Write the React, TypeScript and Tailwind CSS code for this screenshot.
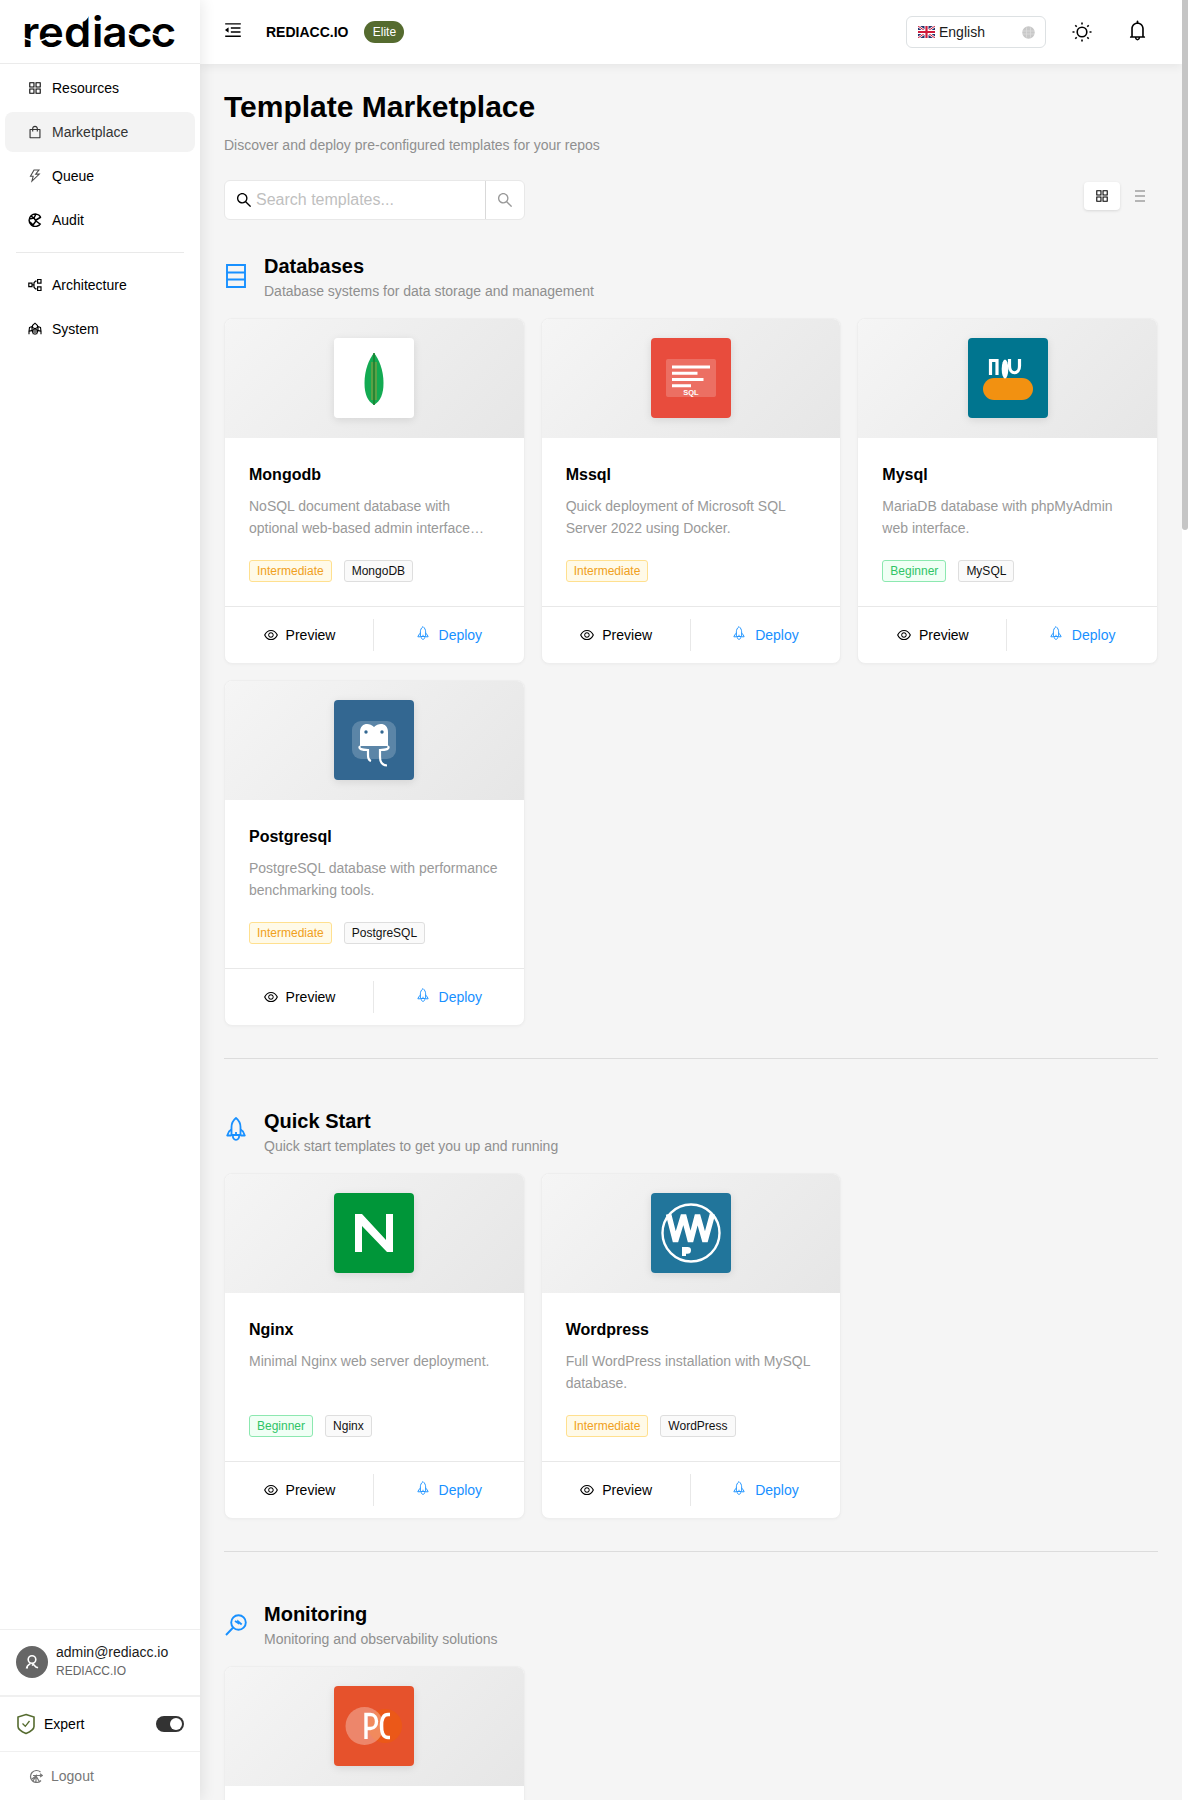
import React from "react";
import { AiOutlineAppstore, AiOutlineBell, AiOutlineEye, AiOutlineMenuFold, AiOutlineSearch, AiOutlineShopping, AiOutlineThunderbolt } from "react-icons/ai";

function Wordmark() {
  return (
    <svg className="block overflow-visible" width="152" height="40" viewBox="0 0 152 40">
      <g transform="scale(1.04 1)">
        <text x="-2 13.5 38.5 65.5 75.5 99 122" y="34.5" fontFamily="Inter, sans-serif" fontWeight="600" fontSize="42">rediacc</text>
      </g>
      <path fill="#fff" d="M58 2v8q5-1 8-8z" />
      <path stroke="#fff" strokeWidth="1.8" fill="none" d="M0 26L9 29M16 29L26 25M103 21l9 3M127 21l9 3" />
    </svg>
  );
}

function RocketIcon({ width, height, stroke, className }: { width: number; height: number; stroke: number; className?: string }) {
  return (
    <svg className={className} width={width} height={height} viewBox="0 0 20 24" fill="none" stroke="currentColor" strokeWidth={stroke} strokeLinejoin="round">
      <path d="M10 1C7 3.500 5.500 6.500 5.500 10v8h9v-8C14.500 6.500 13 3.500 10 1z" />
      <path d="M5.500 12.500L3 14.500 1.200 18.500H5.500M14.500 12.500l2.500 2 1.800 4h-4.300M7 18.500c-.6 2 1 4.300 3 4.300s3.600-2.300 3-4.300M10 15v2.500" />
    </svg>
  );
}

function AuditIcon() {
  return (
    <svg width="14" height="14" viewBox="0 0 14 14" fill="none" stroke="currentColor" strokeWidth="1.5">
      <path d="M12.6 4A6.2 6.2 0 1 0 12.6 10.500M1 6l5-1 2 3-3 4M6 5l2-4M8 8l4 3M8 7l5-3M3 3l3 2M5 12L2 9" />
    </svg>
  );
}
function ArchitectureIcon() {
  return (
    <svg width="14" height="14" viewBox="0 0 14 14" fill="none" stroke="currentColor" strokeWidth="1.2">
      <path d="M.8 5.200h3.200v3.400H.8zM9.600 1.500h3.400v3.600H9.600zM9.600 8.900h3.400v3.600H9.600zM4 6.900h1.600M8.600 3.100H7.500L6 4.800v4.400l1.500 1.600h1.100" />
    </svg>
  );
}
function SystemIcon() {
  return (
    <svg width="14" height="14" viewBox="0 0 14 14" fill="none" stroke="currentColor" strokeWidth="1.1">
      <path d="M4.500 3.500L7 1.200l2.500 2.300v2L7 6.800 4.500 5.500zM1.500 5.500L4 4.500v4L1 9.200zM12.500 5.500L10 4.500v4l3 .7zM1 12.300V9.200L4 8.500l1.500 3.800M13 12.300V9.200l-3-.7-1.500 3.800M5 12V8l2-1.200L9 8v4M7 8v5" />
    </svg>
  );
}
function LogoutIcon() {
  return (
    <svg width="14" height="14" viewBox="0 0 14 14" fill="none" stroke="currentColor" strokeWidth="1.2">
      <path d="M11.500 3A6 6 0 1 0 12 11.500M4 6.500h9M11 4.800l2.200 1.700L11 8M3 10l4-3 3 5M4 12l3-5v6" />
    </svg>
  );
}

function NavItem({ icon, label, active }: { icon: React.ReactNode; label: string; active?: boolean }) {
  return (
    <div className={active ? "mx-[5px] flex h-10 items-center gap-[10px] rounded-lg bg-[#f3f3f3] pl-[23px] text-sm text-[#333]" : "mx-[5px] flex h-10 items-center gap-[10px] pl-[23px] text-sm"}>
      <span className="flex w-[14px] shrink-0 justify-center">{icon}</span>
      {label}
    </div>
  );
}

function Sidebar() {
  return (
    <aside className="relative z-10 flex w-[200px] shrink-0 flex-col bg-white shadow-[2px_0_14px_rgba(0,0,0,0.09)]">
      <div className="h-16 border-b border-[#ebebeb] pl-6 pt-3"><Wordmark /></div>
      <nav className="flex flex-col gap-1 pt-1">
        <NavItem icon={<AiOutlineAppstore size={16} className="shrink-0" />} label="Resources" />
        <NavItem icon={<AiOutlineShopping size={16} className="shrink-0" />} label="Marketplace" active />
        <NavItem icon={<AiOutlineThunderbolt size={16} className="shrink-0 opacity-70" />} label="Queue" />
        <NavItem icon={<AuditIcon />} label="Audit" />
      </nav>
      <div className="mx-4 mb-3 mt-3 h-px bg-[#e9e9e9]" />
      <nav className="flex flex-col gap-1">
        <NavItem icon={<ArchitectureIcon />} label="Architecture" />
        <NavItem icon={<SystemIcon />} label="System" />
      </nav>
      <div className="mt-auto">
        <div className="flex h-[66px] items-center gap-2 border-t border-[#efefef] px-4 pb-[2px]">
          <div className="flex size-8 items-center justify-center rounded-full bg-[#666] text-white">
            <svg width="14" height="16" viewBox="0 0 14 16" fill="none" stroke="currentColor" strokeWidth="1.6">
              <circle cx="7" cy="5.500" r="3.800" />
              <path d="M1.500 14.500c.3-3 2.300-4 4-5M7.500 9.500L11 13l2 .8M3 13.800H1M9 9.500l-2 2" />
            </svg>
          </div>
          <div>
            <div className="text-sm leading-5 text-[#1a1a1a]">admin@rediacc.io</div>
            <div className="text-xs leading-[19px] text-[#666]">REDIACC.IO</div>
          </div>
        </div>
        <div className="flex h-[56px] items-center border-t-2 border-[#f0f0f0] px-4 pb-px">
          <svg width="20" height="22" viewBox="0 0 20 22" fill="none" stroke="#556b2f" strokeWidth="1.6">
            <path d="M10 1.500L18 4v9.500c0 3-4 5.300-8 7-4-1.700-8-4-8-7V4z" />
            <path d="M6.500 10.500l2.800 2.800L13.500 8" strokeWidth="1.300" />
          </svg>
          <span className="ml-2 text-sm">Expert</span>
          <div className="ml-auto flex h-4 w-7 items-center justify-end rounded-full bg-[#333] pr-0.5"><div className="size-3 rounded-full bg-white" /></div>
        </div>
        <div className="flex h-[49px] items-center gap-2 border-t border-[#f0f0f0] pl-[29px] text-sm text-[#777]"><LogoutIcon />Logout</div>
      </div>
    </aside>
  );
}

function Flag() {
  return (
    <svg width="17" height="12" viewBox="0 0 17 12">
      <path fill="#24336d" d="M0 0h17v12H0z" />
      <path stroke="#fff" strokeWidth="2.400" d="M0 0l17 12M17 0L0 12" />
      <path stroke="#cf1b3b" strokeWidth="1" d="M0 0l17 12M17 0L0 12" />
      <path stroke="#fff" strokeWidth="4" d="M8.500 0v12M0 6h17" />
      <path stroke="#cf1b3b" strokeWidth="2.200" d="M8.500 0v12M0 6h17" />
    </svg>
  );
}

function Header() {
  return (
    <header className="flex h-16 items-center bg-white pl-[23px] pr-8 shadow-[0_2px_10px_rgba(0,0,0,0.07)]">
      <AiOutlineMenuFold size={20} className="-mt-1" />
      <span className="ml-[23px] text-sm font-bold">REDIACC.IO</span>
      <span className="ml-4 flex h-[22px] w-10 items-center justify-center rounded-full bg-[#556b2f] text-xs text-white">Elite</span>
      <div className="ml-auto flex h-8 w-[140px] items-center rounded-md border border-[#dde1e3] pl-[11px] pr-[10px] text-sm text-[#1a1a1a]">
        <Flag /><span className="ml-1">English</span>
        <svg className="ml-auto" width="13" height="13" viewBox="0 0 13 13"><circle cx="6.500" cy="6.500" r="6.200" fill="#c8c8c8" /><path d="M1 5h11M1 8h11M4.500 1.500v10M8.500 1.500v10" stroke="#dcdcdc" strokeWidth=".8" /></svg>
      </div>
      <svg className="ml-[26px]" width="20" height="20" viewBox="0 0 20 20" fill="none" stroke="#000" strokeWidth="1.600">
        <circle cx="10" cy="10" r="4.800" />
        <path d="M10 .5v2M10 17.500v2M.5 10h2M17.500 10h2M3.300 3.300l1.400 1.400M15.300 15.300l1.400 1.400M3.300 16.700l1.400-1.400M15.300 4.700l1.400-1.400" />
      </svg>
      <AiOutlineBell size={23} className="-mt-1 ml-[34px] mr-px" />
    </header>
  );
}

function Tag({ kind }: { kind: string }) {
  const tone = kind === "Intermediate" ? "border-[#ffe08f] bg-[#fffae8] text-[#f0a020]" : kind === "Beginner" ? "border-[#8ce8b0] bg-[#f0fff5] text-[#2fc466]" : "border-[#dedede] bg-[#fafafa] text-[#111]";
  return <span className={`flex h-[22px] items-center rounded-[3px] border px-[7px] text-xs ${tone}`}>{kind}</span>;
}

const art: Record<string, React.ReactNode> = {
  Mongodb: (
    <>
      <path fill="#fff" d="M0 0h80v80H0z" />
      <path fill="#13aa52" d="M40 15c5 6 9.500 17 9.500 30 0 11-3 18-9.500 22-6.500-4-9.500-11-9.500-22 0-13 4.500-24 9.500-30z" />
      <path fill="#6b9f43" d="M37 24h6v38h-6z" opacity=".8" />
      <path stroke="#1b8030" strokeWidth="1.600" d="M40 15v52" />
    </>
  ),
  Mssql: (
    <>
      <path fill="#e84c3d" d="M0 0h80v80H0z" />
      <rect x="15" y="21" width="50" height="38" rx="2" fill="#fff" opacity=".2" />
      <path stroke="#fff" strokeWidth="3" d="M21 29h38M21 35.200h25.500M21 41.500h31.500M21 47.800h19" />
      <text x="40" y="57" textAnchor="middle" fontFamily="Liberation Sans, sans-serif" fontWeight="700" fontSize="7.500" fill="#fff">SQL</text>
    </>
  ),
  Mysql: (
    <>
      <path fill="#00758f" d="M0 0h80v80H0z" />
      <rect x="15" y="40" width="50" height="22" rx="11" fill="#f29111" />
      <path fill="none" stroke="#fff" strokeWidth="3.200" d="M22.500 37V22.500H29V37M41.500 21v7c0 9 10 9 10 0v-7" />
      <ellipse cx="37" cy="31" rx="3.300" ry="9.500" fill="#fff" />
    </>
  ),
  Postgresql: (
    <>
      <path fill="#336791" d="M0 0h80v80H0z" />
      <rect x="18" y="21" width="44" height="38" rx="9" fill="#fff" opacity=".2" />
      <path fill="#fff" d="M26 46V32c0-9 9-10 14-5 5-5 14-4 14 5v14z" />
      <path stroke="#fff" strokeWidth="2.200" fill="none" d="M26 46c-2 3 2 4 8 4v5q0 5 3 6M54 46c2 3-2 4-8 4v7q0 8 7 8.500" />
      <circle cx="32" cy="32" r="1.700" fill="#336791" /><circle cx="48" cy="32" r="1.700" fill="#336791" />
    </>
  ),
  Nginx: (
    <>
      <path fill="#009639" d="M0 0h80v80H0z" />
      <path fill="#fff" d="M21 59V21h7l24 26V21h7v38h-6L28 33v26z" />
    </>
  ),
  Wordpress: (
    <>
      <path fill="#21759b" d="M0 0h80v80H0z" />
      <circle cx="40" cy="40" r="28.500" fill="none" stroke="#fff" strokeWidth="2.400" />
      <path fill="none" stroke="#fff" strokeWidth="5.500" strokeLinejoin="bevel" d="M17.500 21l7 27.500L32.500 22l7 26.500L46.500 22l7.500 26.500L61.500 21" />
      <path fill="#fff" d="M31 54h5.500q3.500 0 3.500 3.300 0 3.500-3.500 3.500H35V63h-4z" />
    </>
  ),
  Prometheus: (
    <>
      <path fill="#e6522c" d="M0 0h80v80H0z" />
      <circle cx="51" cy="40" r="17" fill="#eb5818" />
      <circle cx="30.500" cy="40" r="19" fill="#fff" opacity=".3" />
      <path stroke="#fff" strokeWidth="3.400" fill="none" d="M32 53V28.500H36.500c8 0 8 14 0 14H32M56 28.500h-2c-5 0-6.500 4-6.500 11.500S49 51.500 54 51.500h2" />
    </>
  ),
};

function CardCover({ name }: { name: string }) {
  return (
    <div className="flex h-[119px] items-start justify-center bg-[linear-gradient(135deg,#f5f5f5,#e6e6e6)] pt-[19px]">
      <svg className="overflow-hidden rounded shadow-[0_2px_8px_rgba(0,0,0,0.1)]" width="80" height="80" viewBox="0 0 80 80">{art[name]}</svg>
    </div>
  );
}

function Card({ name, desc, tags }: { name: string; desc?: string[]; tags?: string[] }) {
  return (
    <article className="h-[346px] overflow-hidden rounded-lg border border-[#eeeeee] bg-white shadow-[0_1px_3px_rgba(0,0,0,0.03)]">
      <CardCover name={name} />
      {desc && tags && (
        <>
          <div className="h-[168px] px-6 pt-[25px]">
            <h3 className="text-base font-bold leading-6">{name}</h3>
            <div className="mt-2 h-11 whitespace-nowrap text-sm leading-[22px] text-[#999]">{desc.map((d) => <div key={d}>{d}</div>)}</div>
            <div className="mt-[21px] flex gap-3">{tags.map((t) => <Tag key={t} kind={t} />)}</div>
          </div>
          <div className="flex h-[57px] items-center border-t border-[#e8e8e8] text-sm">
            <div className="flex w-[148px] items-center justify-center gap-[7px]"><AiOutlineEye size={16} />Preview</div>
            <div className="h-8 w-px bg-[#e8e8e8]" />
            <div className="flex flex-1 items-center justify-center gap-[10px] pl-px text-[#1890ff]"><RocketIcon width={12} height={14} stroke={1.600} className="-mt-1" />Deploy</div>
          </div>
        </>
      )}
    </article>
  );
}

function Section({ icon, title, sub, children }: { icon: React.ReactNode; title: string; sub: string; children: React.ReactNode }) {
  return (
    <section>
      <div className="flex h-[66px] gap-4">
        <div className="mt-3 flex h-6 w-6 items-center justify-center text-[#1890ff]">{icon}</div>
        <div><h2 className="text-xl font-bold leading-7">{title}</h2><p className="text-sm leading-[22px] text-[#8f8f8f]">{sub}</p></div>
      </div>
      <div className="grid grid-cols-3 gap-4">{children}</div>
    </section>
  );
}

export default function App() {
  return (
    <div className="flex h-[1800px] w-[1188px] overflow-hidden bg-[#f5f5f5] font-['Liberation_Sans',Arial,sans-serif] text-black">
      <Sidebar />
      <div className="min-w-0 flex-1">
        <Header />
        <main className="px-6 pt-6">
          <h1 className="text-[30px] font-bold leading-[38px]">Template Marketplace</h1>
          <p className="mt-2 text-sm leading-[22px] text-[#8f8f8f]">Discover and deploy pre-configured templates for your repos</p>
          <div className="mt-6 flex items-start justify-between">
            <div className="flex h-10 w-[301px] rounded-md border border-[#e8e8e8] bg-white">
              <div className="flex flex-1 items-center gap-[3px] pl-[10px]"><AiOutlineSearch size={18} /><span className="text-base text-[#bfbfbf]">Search templates...</span></div>
              <div className="flex w-[39px] items-center justify-center border-l border-[#d9d9d9] text-[#999]"><AiOutlineSearch size={18} /></div>
            </div>
            <div className="mt-[2px] flex items-center">
              <div className="flex h-7 w-9 items-center justify-center rounded bg-white shadow-[0_1px_3px_rgba(0,0,0,0.12)]"><AiOutlineAppstore size={16} /></div>
              <div className="ml-[2px] flex h-7 w-9 items-center justify-center">
                <svg width="10" height="12" viewBox="0 0 10 12" stroke="#777" strokeWidth="1.200"><path d="M0 1h10M0 6h10M0 11h10" /></svg>
              </div>
            </div>
          </div>
          <div className="mt-8">
            <Section title="Databases" sub="Database systems for data storage and management" icon={<svg width="20" height="24" viewBox="0 0 20 24" fill="none" stroke="currentColor" strokeWidth="1.900"><path d="M1 1h18v22H1zM1 8.500h18M1 15.500h18" /></svg>}>
              <Card name="Mongodb" desc={["NoSQL document database with", "optional web-based admin interface…"]} tags={["Intermediate", "MongoDB"]} />
              <Card name="Mssql" desc={["Quick deployment of Microsoft SQL", "Server 2022 using Docker."]} tags={["Intermediate"]} />
              <Card name="Mysql" desc={["MariaDB database with phpMyAdmin", "web interface."]} tags={["Beginner", "MySQL"]} />
              <Card name="Postgresql" desc={["PostgreSQL database with performance", "benchmarking tools."]} tags={["Intermediate", "PostgreSQL"]} />
            </Section>
          </div>
          <div className="mb-12 mt-8 h-px bg-[#dcdcdc]" />
          <Section title="Quick Start" sub="Quick start templates to get you up and running" icon={<RocketIcon width={20} height={24} stroke={1.800} className="-mt-1" />}>
            <Card name="Nginx" desc={["Minimal Nginx web server deployment."]} tags={["Beginner", "Nginx"]} />
            <Card name="Wordpress" desc={["Full WordPress installation with MySQL", "database."]} tags={["Intermediate", "WordPress"]} />
          </Section>
          <div className="mb-12 mt-8 h-px bg-[#dcdcdc]" />
          <Section title="Monitoring" sub="Monitoring and observability solutions" icon={<svg width="24" height="24" viewBox="0 0 24 24" fill="none" stroke="currentColor" strokeWidth="1.900"><circle cx="14.500" cy="10.500" r="7.300" /><path d="M9.200 15.500L2 23M11 9l3.200 2V9.500l3.500 3" /></svg>}>
            <Card name="Prometheus" />
          </Section>
        </main>
      </div>
      <div className="w-[6px] shrink-0 bg-white"><div className="h-[530px] rounded-b bg-[#c5c5c5]" /></div>
    </div>
  );
}
